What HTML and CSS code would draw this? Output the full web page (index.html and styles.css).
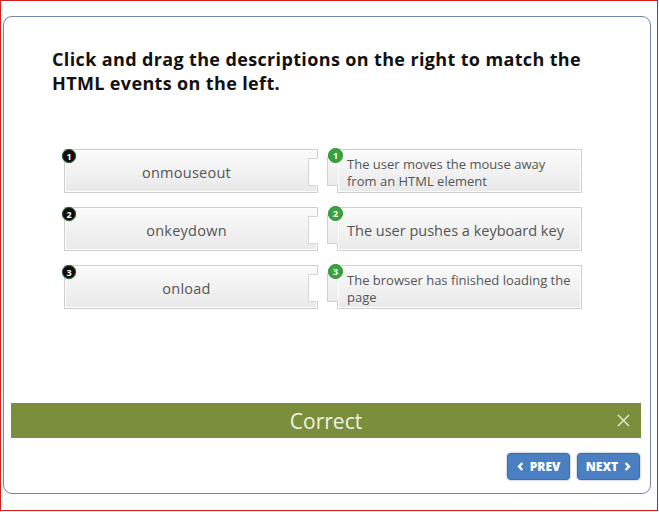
FILE: index.html
```html
<!DOCTYPE html>
<html>
<head>
<meta charset="utf-8">
<link rel="stylesheet" href="styles.css">
</head>
<body>
<div class="frame">
  <div class="card">
    <h1 class="title">Click and drag the descriptions on the right to match the HTML events on the left.</h1>
    <div class="pairs">
      <div class="row">
        <div class="term"><span class="num dark">1</span><span class="term-text">onmouseout</span><span class="socket"></span></div>
        <div class="desc"><span class="tab"></span><span class="num green">1</span><span class="desc-text small">The user moves the mouse away from an HTML element</span></div>
      </div>
      <div class="row">
        <div class="term"><span class="num dark">2</span><span class="term-text">onkeydown</span><span class="socket"></span></div>
        <div class="desc"><span class="tab"></span><span class="num green">2</span><span class="desc-text big">The user pushes a keyboard key</span></div>
      </div>
      <div class="row">
        <div class="term"><span class="num dark">3</span><span class="term-text">onload</span><span class="socket"></span></div>
        <div class="desc"><span class="tab"></span><span class="num green">3</span><span class="desc-text small">The browser has finished loading the page</span></div>
      </div>
    </div>
    <div class="feedback">
      <span class="feedback-text">Correct</span>
      <svg class="close" width="13" height="13" viewBox="0 0 13 13"><path d="M1 1 L12 12 M12 1 L1 12" stroke="#eef0e0" stroke-width="1.4" fill="none"/></svg>
    </div>
    <div class="nav">
      <button class="btn"><svg class="chev" width="7" height="9" viewBox="0 0 7 9"><path d="M5.4 1 L2 4.5 L5.4 8" stroke="#fff" stroke-width="2.4" fill="none"/></svg>PREV</button>
      <button class="btn">NEXT<svg class="chev" width="7" height="9" viewBox="0 0 7 9"><path d="M1.6 1 L5 4.5 L1.6 8" stroke="#fff" stroke-width="2.4" fill="none"/></svg></button>
    </div>
  </div>
</div>
</body>
</html>
```
FILE: styles.css
```css
* { box-sizing: border-box; }
html, body { margin: 0; padding: 0; background: #fff; }
body { font-family: "Open Sans", "DejaVu Sans", sans-serif; }

.frame {
  width: 658px;
  height: 511px;
  border: 1px solid #d41f1f;
  padding: 15px 0 0 2px;
}

.card {
  width: 648px;
  height: 478px;
  border: 1px solid #7487a8;
  border-radius: 9px;
  background: #fff;
  padding: 30px 0 0 0;
}

.title {
  margin: 0 0 0 48px;
  width: 580px;
  font-size: 18px;
  line-height: 24px;
  font-weight: 700;
  letter-spacing: 0.36px;
  color: #111;
}

.pairs {
  margin: 54px 0 0 60px;
  display: flex;
  flex-direction: column;
  gap: 14px;
}

.row {
  display: flex;
  gap: 19px;
  height: 44px;
}

.term, .desc {
  position: relative;
  height: 44px;
  border: 1px solid #cfcfcf;
  background: linear-gradient(#fbfbfb, #e9e9e9);
  box-shadow: inset 0 0 0 1px #fff;
}

.term {
  width: 254px;
  display: flex;
  align-items: center;
  justify-content: center;
  padding-right: 9px;
}

.term-text {
  font-size: 14.5px;
  color: #555;
  letter-spacing: 0.25px;
  padding-top: 3px;
}

.socket {
  position: absolute;
  right: -1px;
  top: 8px;
  width: 10px;
  height: 28px;
  background: #fff;
  border: 1px solid #d6d6d6;
  border-right: none;
}

.desc {
  width: 245px;
  display: flex;
  align-items: center;
  padding: 0 8px 0 9px;
}

.tab {
  position: absolute;
  left: -11px;
  top: 7px;
  width: 11px;
  height: 29px;
  border: 1px solid #cfcfcf;
  border-right: none;
  background: linear-gradient(#f6f6f6, #ececec);
}

.desc-text { color: #555; }
.desc-text.small { font-size: 13px; line-height: 17px; padding-top: 4px; }
.desc-text.big { font-size: 14.5px; line-height: 20px; padding-top: 3px; }

.num {
  position: absolute;
  border-radius: 50%;
  color: #fff;
  font-weight: 700;
  display: flex;
  align-items: center;
  justify-content: center;
  line-height: 1;
}

.num.dark {
  left: -3px;
  top: -1px;
  width: 14px;
  height: 14px;
  background: #0d0d0d;
  border: 1px solid #2c5a38;
  box-shadow: 0 0 1px #5c8a5c;
  font-size: 9px;
}

.num.green {
  left: -10px;
  top: -2px;
  width: 15px;
  height: 15px;
  background: #3aa23e;
  border: 1px solid #2d8a31;
  font-size: 9px;
}

.feedback {
  position: relative;
  margin: 94px 0 0 7px;
  width: 630px;
  height: 35px;
  background: #7a8e3b;
  display: flex;
  align-items: center;
  justify-content: center;
}

.feedback-text {
  color: #f1f3e4;
  font-size: 21px;
}

.close {
  position: absolute;
  right: 11px;
  top: 11px;
}

.nav {
  display: flex;
  justify-content: flex-end;
  gap: 7px;
  margin: 15px 10px 0 0;
}

.btn {
  width: 63px;
  height: 27px;
  border: 1px solid #3e6ea8;
  border-radius: 4px;
  background: #4a7fc1;
  box-shadow: 0 0 2px rgba(40, 70, 120, 0.6);
  color: #fff;
  font-family: "Open Sans", sans-serif;
  font-weight: 800;
  font-size: 12px;
  padding: 0;
  display: flex;
  align-items: center;
  justify-content: center;
  gap: 6px;
}
```
